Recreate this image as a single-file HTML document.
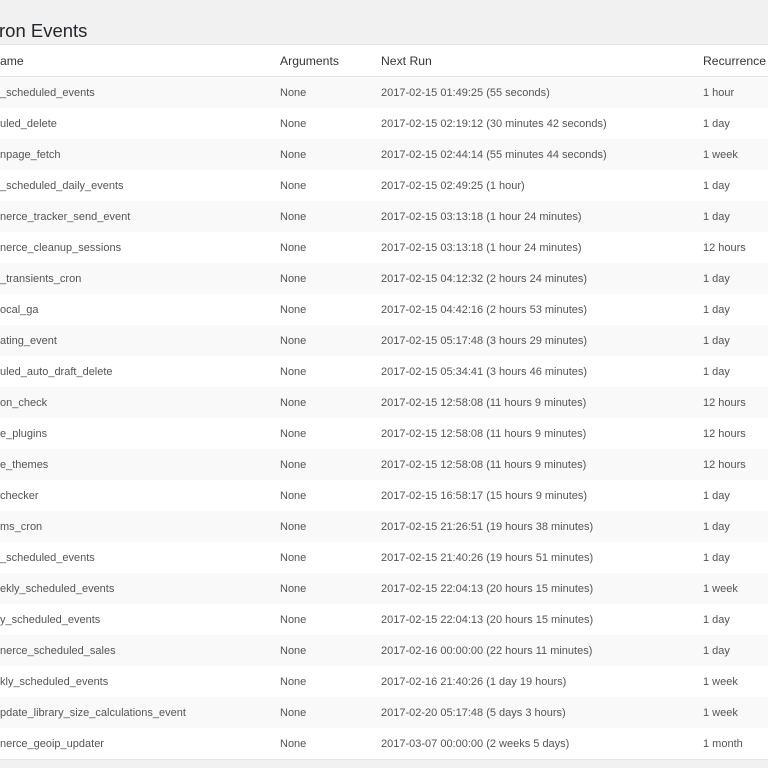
<!DOCTYPE html>
<html><head><meta charset="utf-8"><style>
body{margin:0;width:768px;height:768px;background:#f1f1f1;font-family:"Liberation Sans",sans-serif;color:#555;overflow:hidden;position:relative}
h1{position:absolute;left:-1px;top:20px;margin:0;font-size:18.5px;font-weight:400;color:#23282d}
.t{position:absolute;left:-2px;top:44px;width:772px;background:#fff;border-top:1px solid #e5e5e5;border-bottom:1px solid #e5e5e5}
.r{height:31px;position:relative;font-size:11px}
.r span{position:absolute;top:10px;white-space:nowrap}
.h{height:31px;border-bottom:1px solid #e1e1e1;font-size:12.2px;color:#32373c}
.h span{top:9px}
.r:nth-child(even){background:#f9f9f9}
.a{left:2px}.b{left:282px}.c{left:383px}.d{left:705px}
</style></head><body>
<h1>ron Events</h1>
<div class="t">
<div class="r h"><span class="a">ame</span><span class="b">Arguments</span><span class="c">Next Run</span><span class="d">Recurrence</span></div>
<div class="r"><span class="a">_scheduled_events</span><span class="b">None</span><span class="c">2017-02-15 01:49:25 (55 seconds)</span><span class="d">1 hour</span></div>
<div class="r"><span class="a">uled_delete</span><span class="b">None</span><span class="c">2017-02-15 02:19:12 (30 minutes 42 seconds)</span><span class="d">1 day</span></div>
<div class="r"><span class="a">npage_fetch</span><span class="b">None</span><span class="c">2017-02-15 02:44:14 (55 minutes 44 seconds)</span><span class="d">1 week</span></div>
<div class="r"><span class="a">_scheduled_daily_events</span><span class="b">None</span><span class="c">2017-02-15 02:49:25 (1 hour)</span><span class="d">1 day</span></div>
<div class="r"><span class="a">nerce_tracker_send_event</span><span class="b">None</span><span class="c">2017-02-15 03:13:18 (1 hour 24 minutes)</span><span class="d">1 day</span></div>
<div class="r"><span class="a">nerce_cleanup_sessions</span><span class="b">None</span><span class="c">2017-02-15 03:13:18 (1 hour 24 minutes)</span><span class="d">12 hours</span></div>
<div class="r"><span class="a">_transients_cron</span><span class="b">None</span><span class="c">2017-02-15 04:12:32 (2 hours 24 minutes)</span><span class="d">1 day</span></div>
<div class="r"><span class="a">ocal_ga</span><span class="b">None</span><span class="c">2017-02-15 04:42:16 (2 hours 53 minutes)</span><span class="d">1 day</span></div>
<div class="r"><span class="a">ating_event</span><span class="b">None</span><span class="c">2017-02-15 05:17:48 (3 hours 29 minutes)</span><span class="d">1 day</span></div>
<div class="r"><span class="a">uled_auto_draft_delete</span><span class="b">None</span><span class="c">2017-02-15 05:34:41 (3 hours 46 minutes)</span><span class="d">1 day</span></div>
<div class="r"><span class="a">on_check</span><span class="b">None</span><span class="c">2017-02-15 12:58:08 (11 hours 9 minutes)</span><span class="d">12 hours</span></div>
<div class="r"><span class="a">e_plugins</span><span class="b">None</span><span class="c">2017-02-15 12:58:08 (11 hours 9 minutes)</span><span class="d">12 hours</span></div>
<div class="r"><span class="a">e_themes</span><span class="b">None</span><span class="c">2017-02-15 12:58:08 (11 hours 9 minutes)</span><span class="d">12 hours</span></div>
<div class="r"><span class="a">checker</span><span class="b">None</span><span class="c">2017-02-15 16:58:17 (15 hours 9 minutes)</span><span class="d">1 day</span></div>
<div class="r"><span class="a">ms_cron</span><span class="b">None</span><span class="c">2017-02-15 21:26:51 (19 hours 38 minutes)</span><span class="d">1 day</span></div>
<div class="r"><span class="a">_scheduled_events</span><span class="b">None</span><span class="c">2017-02-15 21:40:26 (19 hours 51 minutes)</span><span class="d">1 day</span></div>
<div class="r"><span class="a">ekly_scheduled_events</span><span class="b">None</span><span class="c">2017-02-15 22:04:13 (20 hours 15 minutes)</span><span class="d">1 week</span></div>
<div class="r"><span class="a">y_scheduled_events</span><span class="b">None</span><span class="c">2017-02-15 22:04:13 (20 hours 15 minutes)</span><span class="d">1 day</span></div>
<div class="r"><span class="a">nerce_scheduled_sales</span><span class="b">None</span><span class="c">2017-02-16 00:00:00 (22 hours 11 minutes)</span><span class="d">1 day</span></div>
<div class="r"><span class="a">kly_scheduled_events</span><span class="b">None</span><span class="c">2017-02-16 21:40:26 (1 day 19 hours)</span><span class="d">1 week</span></div>
<div class="r"><span class="a">pdate_library_size_calculations_event</span><span class="b">None</span><span class="c">2017-02-20 05:17:48 (5 days 3 hours)</span><span class="d">1 week</span></div>
<div class="r"><span class="a">nerce_geoip_updater</span><span class="b">None</span><span class="c">2017-03-07 00:00:00 (2 weeks 5 days)</span><span class="d">1 month</span></div>
</div>
</body></html>
